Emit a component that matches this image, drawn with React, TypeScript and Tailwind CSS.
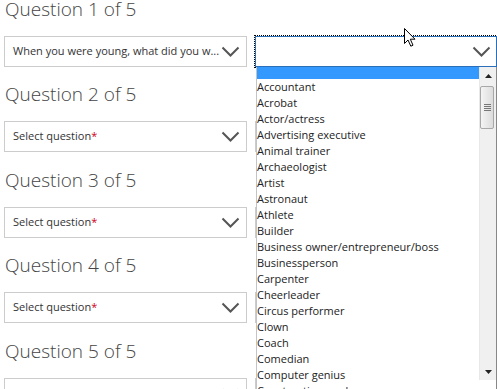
import React from "react";

const items = [
  "Accountant",
  "Acrobat",
  "Actor/actress",
  "Advertising executive",
  "Animal trainer",
  "Archaeologist",
  "Artist",
  "Astronaut",
  "Athlete",
  "Builder",
  "Business owner/entrepreneur/boss",
  "Businessperson",
  "Carpenter",
  "Cheerleader",
  "Circus performer",
  "Clown",
  "Coach",
  "Comedian",
  "Computer genius",
  "Construction worker",
];

const blocks = [
  { n: 1, mb: "mb-[15px]" },
  { n: 2, mb: "mb-[16px]" },
  { n: 3, mb: "mb-[15px]" },
  { n: 4, mb: "mb-[16px]" },
  { n: 5, mb: "mb-[16px]" },
];

function Chevron() {
  return (
    <svg width="19" height="11" viewBox="0 0 19 11" className="shrink-0">
      <polyline points="1.5,1.5 9.5,9.5 17.5,1.5" fill="none" stroke="#555" strokeWidth="2" />
    </svg>
  );
}

export default function App() {
  return (
    <div
      className="relative w-[497px] h-[389px] overflow-hidden bg-white"
      style={{ fontFamily: '"Open Sans", "Liberation Sans", sans-serif' }}
    >
      <div className="-mt-[3px] pl-[4px]">
        {blocks.map((b) => (
          <div key={b.n} className={b.mb}>
            <div className="text-[19px] leading-[24px] font-light text-[#444] pl-px whitespace-nowrap">
              Question {b.n} of 5
            </div>
            <div className="mt-[15px] flex gap-[8px]">
              <div className="w-[243px] h-[31px] border border-[#ccc] flex items-center justify-between pl-[8px] pr-[6px]">
                {b.n === 1 ? (
                  <span className="text-[11px] text-[#333] whitespace-nowrap">
                    When you were young, what did you w...
                  </span>
                ) : (
                  <span className="text-[11px] text-[#333] whitespace-nowrap">
                    Select question<span className="text-[#d0021b]">*</span>
                  </span>
                )}
                <Chevron />
              </div>
              {b.n === 1 ? (
                <div className="w-[242px] h-[31px] border border-[#2a6fb8] outline outline-1 outline-dotted outline-black flex items-center justify-end pr-[5px]">
                  <Chevron />
                </div>
              ) : (
                <div className="w-[242px] h-[31px] border border-[#ccc]" />
              )}
            </div>
          </div>
        ))}
      </div>

      {/* open dropdown list */}
      <div className="absolute left-[256px] top-[67px] w-[241px] h-[350px] bg-white border-l border-r border-l-[#c4c4c4] border-r-[#888] flex items-start text-[11px] leading-[16px] text-[#222]">
        <div className="flex-1 flex flex-col">
          <div className="h-[12px] shrink-0 bg-[#3399ff]" />
          <div className="flex flex-col shrink-0">
            {items.map((it) => (
              <div key={it} className="h-[16px] shrink-0 whitespace-nowrap">
                {it}
              </div>
            ))}
          </div>
        </div>
        <div className="w-[17px] h-[313px] shrink-0 bg-[#f0f0f0] border-l border-[#e8e8e8] flex flex-col">
          <div className="h-[17px] shrink-0 flex items-center justify-center">
            <svg width="7" height="4" viewBox="0 0 7 4">
              <polygon points="3.5,0 7,4 0,4" fill="#222" />
            </svg>
          </div>
          <div className="flex-1 relative">
            <div className="absolute left-[0px] top-[2px] w-[14px] h-[43px] rounded-[2px] border border-[#a8a8a8] bg-gradient-to-r from-[#f4f4f4] to-[#dcdcdc] flex flex-col items-center justify-center gap-[1px]">
              <div className="w-[7px] h-px bg-[#777]" />
              <div className="w-[7px] h-px bg-[#777]" />
              <div className="w-[7px] h-px bg-[#777]" />
              <div className="w-[7px] h-px bg-[#777]" />
            </div>
          </div>
          <div className="h-[17px] shrink-0 flex items-center justify-center">
            <svg width="7" height="4" viewBox="0 0 7 4">
              <polygon points="0,0 7,0 3.5,4" fill="#222" />
            </svg>
          </div>
        </div>
      </div>

      {/* mouse cursor */}
      <svg className="absolute left-[403px] top-[27px]" width="14" height="21" viewBox="0 0 14 21">
        <path
          d="M1.5 1.5 L1.5 16.5 L5 13 L7.8 19.2 L10 18.2 L7.3 12.2 L12 12.2 Z"
          fill="#fff"
          stroke="#000"
          strokeWidth="1"
          strokeLinejoin="miter"
        />
      </svg>
    </div>
  );
}
